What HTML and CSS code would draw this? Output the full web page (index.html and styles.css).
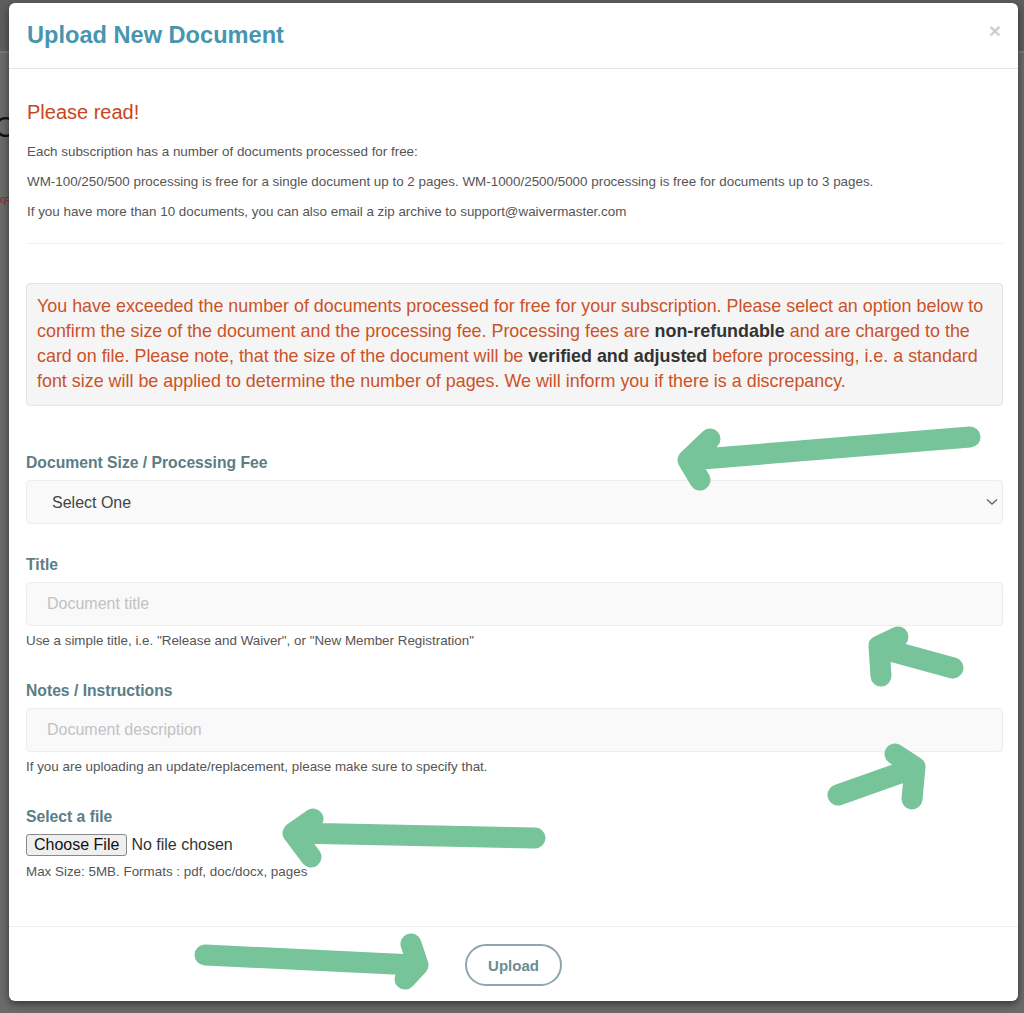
FILE: index.html
```html
<!DOCTYPE html>
<html lang="en">
<head>
    <meta charset="UTF-8">
    <meta name="viewport" content="width=device-width, initial-scale=1.0">
    <title>Upload New Document</title>
    <link rel="stylesheet" href="styles.css">
</head>
<body>
    <span class="bg-letter">C</span>
    <span class="bg-code">q=</span>

    <div class="modal">
        <div class="modal-header">
            <h2 class="modal-title">Upload New Document</h2>
            <span class="close">&times;</span>
        </div>

        <div class="modal-body">
            <h4 class="notice">Please read!</h4>
            <p class="info">Each subscription has a number of documents processed for free:</p>
            <p class="info">WM-100/250/500 processing is free for a single document up to 2 pages. WM-1000/2500/5000 processing is free for documents up to 3 pages.</p>
            <p class="info">If you have more than 10 documents, you can also email a zip archive to support@waivermaster.com</p>
            <hr>

            <div class="alert">
                You have exceeded the number of documents processed for free for your subscription. Please select an option below to<br>
                confirm the size of the document and the processing fee. Processing fees are <b>non-refundable</b> and are charged to the<br>
                card on file. Please note, that the size of the document will be <b>verified and adjusted</b> before processing, i.e. a standard<br>
                font size will be applied to determine the number of pages. We will inform you if there is a discrepancy.
            </div>

            <div class="form-group first">
                <label for="fee">Document Size / Processing Fee</label>
                <div class="select-wrap">
                    <select id="fee">
                        <option>Select One</option>
                    </select>
                    <svg class="chevron" width="12" height="8" viewBox="0 0 12 8"><path d="M1 1.5 L6 6 L11 1.5" fill="none" stroke="#666" stroke-width="1.4"/></svg>
                </div>
            </div>

            <div class="form-group">
                <label for="title">Title</label>
                <input type="text" id="title" placeholder="Document title">
                <div class="help">Use a simple title, i.e. "Release and Waiver", or "New Member Registration"</div>
            </div>

            <div class="form-group">
                <label for="notes">Notes / Instructions</label>
                <input type="text" id="notes" placeholder="Document description">
                <div class="help">If you are uploading an update/replacement, please make sure to specify that.</div>
            </div>

            <div class="form-group">
                <label for="file">Select a file</label>
                <input type="file" id="file" class="file">
                <div class="help">Max Size: 5MB. Formats : pdf, doc/docx, pages</div>
            </div>
        </div>

        <div class="modal-footer">
            <button type="button" class="btn-upload">Upload</button>
        </div>
    </div>

    <svg class="arrows" width="1024" height="1013" viewBox="0 0 1024 1013">
        <g fill="none" stroke="#77c39a" stroke-width="21" stroke-linecap="round" stroke-linejoin="round">
            <path d="M970 437 L690 460 M710 439 L688 460 L700 480"/>
            <path d="M953 668 L880 648 M898 637 L879 646 L881 676"/>
            <path d="M838 795 L914 768 M895 754 L915 767 L912 799"/>
            <path d="M535 838 L294 833 M313 819 L293 833 L311 857"/>
            <path d="M205 955 L414 965 M411 944 L418 965 L405 979"/>
        </g>
    </svg>
</body>
</html>
```

FILE: styles.css
```css
body {
    margin: 0;
    height: 1013px;
    overflow: hidden;
    font-family: "Liberation Sans", Arial, sans-serif;
    background: linear-gradient(#5e5e5e 0, #5e5e5e 51px, #7a7a7a 51px, #7a7a7a 53px, #6b6b6b 53px);
    position: relative;
}
.bg-letter {
    position: absolute;
    left: -6px;
    top: 110px;
    font-size: 30px;
    color: #111;
}
.bg-code {
    position: absolute;
    left: 0;
    top: 193px;
    font-size: 11px;
    color: #8a2a3a;
}
.modal {
    position: relative;
    margin: 3px 6px 0 9px;
    height: 998px;
    background: #fff;
    border-radius: 6px;
    box-shadow: 0 3px 9px rgba(0, 0, 0, 0.5);
    display: flex;
    flex-direction: column;
}
.modal-header {
    display: flex;
    justify-content: space-between;
    align-items: flex-start;
    padding: 18px 17px 19px 18px;
    border-bottom: 1px solid #e5e5e5;
}
.modal-title {
    margin: 0;
    font-size: 23.6px;
    line-height: 28px;
    font-weight: bold;
    color: #4796b0;
}
.close {
    font-size: 21px;
    line-height: 14px;
    font-weight: bold;
    color: #cfcfcf;
    margin-top: 3px;
}
.modal-body {
    flex: 1;
    padding: 0 15px 0 17px;
}
.notice {
    margin: 31px 0 19px 1px;
    font-size: 20px;
    line-height: 24px;
    font-weight: normal;
    color: #c8461d;
}
.info {
    margin: 0 0 12px 1px;
    font-size: 13.4px;
    line-height: 18px;
    color: #555;
}
hr {
    margin: 22px 0 39px 1px;
    border: none;
    border-top: 1px solid #eee;
}
.alert {
    background: #f5f5f5;
    border: 1px solid #e3e3e3;
    border-radius: 4px;
    padding: 10px 8px 11px 10px;
    font-size: 17.9px;
    line-height: 25px;
    color: #cc5227;
    white-space: nowrap;
}
.alert b {
    color: #333;
}
.form-group {
    margin-bottom: 31px;
}
.form-group.first {
    margin-top: 47px;
}
.form-group label {
    display: block;
    font-weight: bold;
    font-size: 15.7px;
    line-height: 20px;
    color: #5b7d84;
    margin-bottom: 7px;
}
.select-wrap {
    position: relative;
}
.select-wrap select,
.form-group input[type="text"] {
    display: block;
    width: 100%;
    height: 44px;
    box-sizing: border-box;
    background: #f9f9f9;
    border: 1px solid #ededed;
    border-radius: 4px;
    font-family: inherit;
    font-size: 16px;
    color: #444;
    outline: none;
}
.select-wrap select {
    appearance: none;
    padding: 0 25px;
}
.form-group input[type="text"] {
    padding: 0 20px;
}
.form-group input::placeholder {
    color: #c2c2c2;
}
.chevron {
    position: absolute;
    right: 5px;
    top: 18px;
}
.help {
    margin-top: 6px;
    font-size: 13.4px;
    line-height: 18px;
    color: #555;
}
.file {
    display: block;
    font-family: inherit;
    font-size: 16px;
    color: #333;
    height: 23px;
}
.file::file-selector-button {
    font-family: inherit;
    font-size: 16px;
    padding: 1px 7px;
    margin-right: 4px;
    background: #efefef;
    border: 1px solid #888;
    border-radius: 3px;
    color: #111;
}
.modal-footer {
    border-top: 1px solid #eee;
    height: 75px;
    display: flex;
    justify-content: center;
    padding-top: 17px;
    box-sizing: border-box;
}
.btn-upload {
    width: 97px;
    height: 42px;
    background: #fff;
    border: 2px solid #8ea7ad;
    border-radius: 21px;
    font-family: inherit;
    font-size: 15px;
    font-weight: bold;
    color: #6b8c93;
    cursor: pointer;
}
.arrows {
    position: absolute;
    left: 0;
    top: 0;
    pointer-events: none;
}
```
